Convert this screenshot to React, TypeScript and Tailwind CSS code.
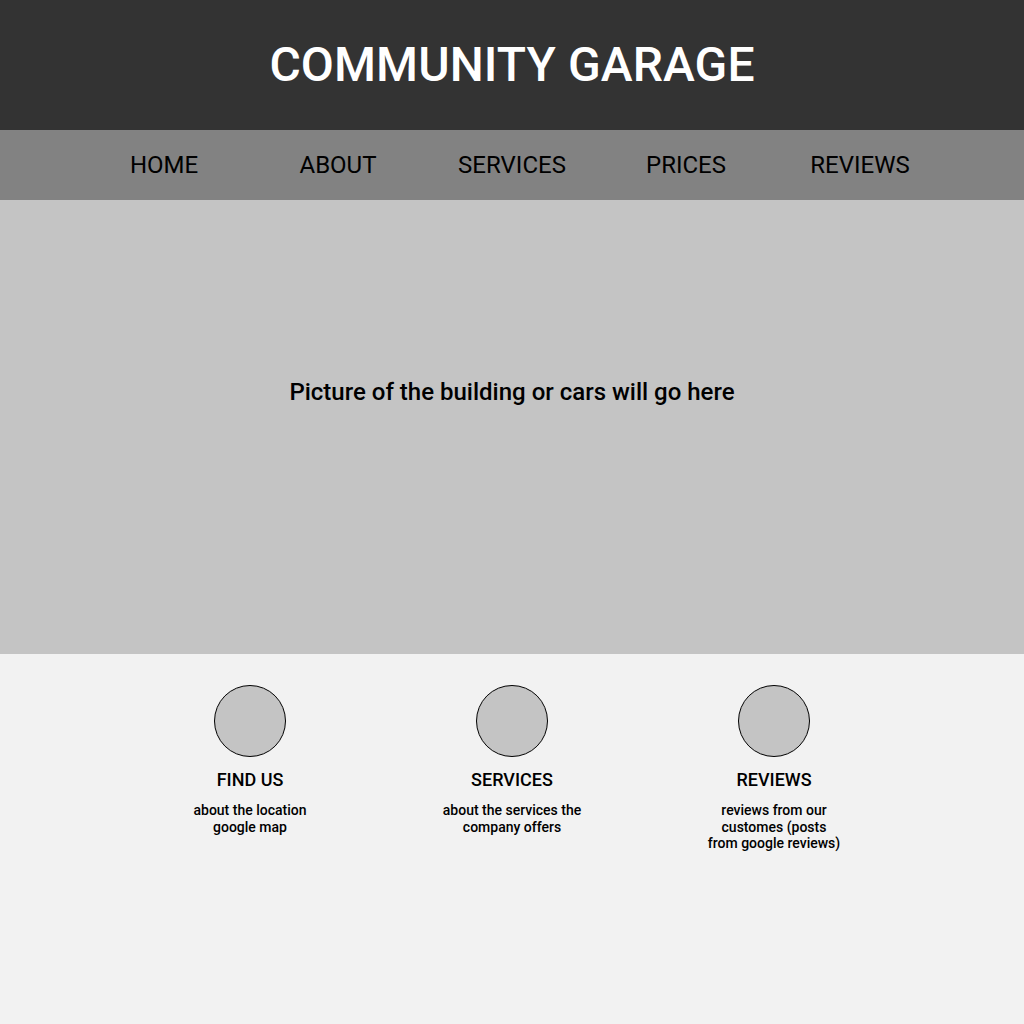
import React from "react";

const nav = ["HOME", "ABOUT", "SERVICES", "PRICES", "REVIEWS"];

const features = [
  { title: "FIND US", lines: ["about the location", "google map"] },
  { title: "SERVICES", lines: ["about the services the", "company offers"] },
  { title: "REVIEWS", lines: ["reviews from our", "customes (posts", "from google reviews)"] },
];

export default function App() {
  return (
    <div className="w-[1024px] h-[1024px] flex flex-col bg-[#f2f2f2] font-['Roboto',sans-serif]">
      <header className="h-[130px] bg-[#333333] flex items-center justify-center">
        <h1 className="text-white text-[48px] font-medium leading-none tracking-[0.1px]">COMMUNITY GARAGE</h1>
      </header>
      <nav className="h-[70px] bg-[#828282] flex items-center justify-center">
        <div className="grid grid-cols-5 w-[870px]">
          {nav.map((n) => (
            <div key={n} className="text-center text-black text-[24px] leading-none">
              {n}
            </div>
          ))}
        </div>
      </nav>
      <section className="h-[454px] bg-[#c4c4c4] flex justify-center pt-[180px]">
        <p className="text-black text-[24px] font-medium leading-[24px]">
          Picture of the building or cars will go here
        </p>
      </section>
      <section className="flex justify-center pt-[31px]">
        <div className="grid grid-cols-3 w-[786px]">
          {features.map((f) => (
            <div key={f.title} className="flex flex-col items-center">
              <div className="w-[72px] h-[72px] rounded-full bg-[#c4c4c4] border border-black" />
              <h2 className="mt-[12px] text-black text-[18px] font-medium leading-[22px]">{f.title}</h2>
              <div className="mt-[11px] text-black text-[14px] font-medium leading-[16.5px] text-center">
                {f.lines.map((l) => (
                  <div key={l}>{l}</div>
                ))}
              </div>
            </div>
          ))}
        </div>
      </section>
    </div>
  );
}
